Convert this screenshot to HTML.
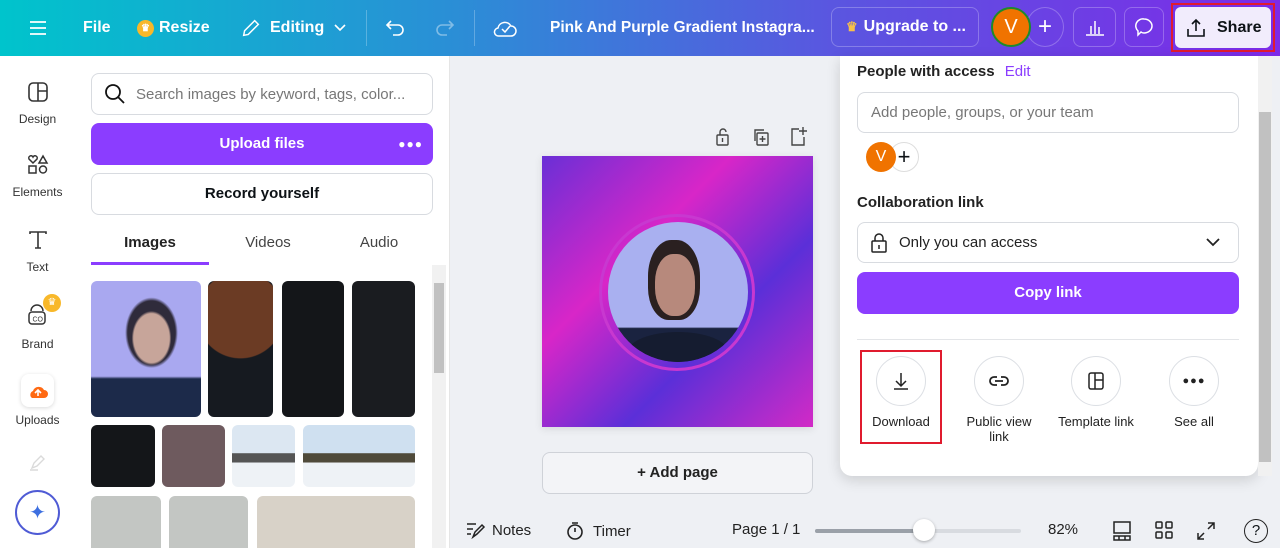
<!DOCTYPE html>
<html><head><meta charset="utf-8"><style>
*{box-sizing:border-box;margin:0;padding:0}
body{width:1280px;height:548px;overflow:hidden;font-family:"Liberation Sans",sans-serif;background:#eef0f4;position:relative;color:#0d1216}
.a{position:absolute}
.hdr{left:0;top:0;width:1280px;height:56px;background:linear-gradient(90deg,#00c4cc 0%,#2a8fd6 35%,#5a56e0 65%,#7d2ae8 100%);color:#fff;font-weight:bold;font-size:16px}
.hdr .h{position:absolute;top:0;height:56px;display:flex;align-items:center}
.btnb{position:absolute;border:1px solid rgba(255,255,255,.25);border-radius:8px;height:40px;top:7px;display:flex;align-items:center}
.side{left:0;top:56px;width:75px;height:492px;background:#fff}
.si{width:75px;text-align:center;font-size:12px;color:#333}
.panel{left:75px;top:56px;width:375px;height:492px;background:#fff;border-right:1px solid #e5e5e5}
.inp{border:1px solid #d8dbe0;border-radius:8px;background:#fff}
.pop{left:840px;top:56px;width:418px;height:420px;background:#fff;border-radius:0 0 12px 12px;box-shadow:0 4px 14px rgba(0,0,0,.15)}
.sb{text-align:center;font-size:13px;color:#222}
.circ{width:50px;height:50px;border-radius:50%;border:1px solid #dcdfe4;margin:0 auto 8px;display:flex;align-items:center;justify-content:center}
</style></head><body>
<div class="a hdr">
 <div class="h" style="left:29px"><svg width="18" height="16" viewBox="0 0 18 16" stroke="#fff" stroke-width="1.8"><path d="M1 2h16M1 8h16M1 14h16"/></svg></div>
 <div class="h" style="left:83px">File</div>
 <div class="h" style="left:137px"><span style="width:17px;height:17px;border-radius:50%;background:#f8b82a;display:inline-block;margin-right:5px;color:#fff;font-size:10px;text-align:center;line-height:17px">♛</span>Resize</div>
 <div class="h" style="left:240px"><svg width="22" height="22" viewBox="0 0 24 24" fill="none" stroke="#fff" stroke-width="1.6"><path d="M4 20l1-5L16 4l4 4L9 19z"/></svg><span style="margin-left:8px">Editing</span><svg style="margin-left:10px" width="12" height="8" viewBox="0 0 12 8" fill="none" stroke="#fff" stroke-width="1.6"><path d="M1 1l5 5 5-5"/></svg></div>
 <div class="a" style="left:366px;top:10px;width:1px;height:36px;background:rgba(255,255,255,.25)"></div>
 <div class="h" style="left:385px"><svg width="22" height="20" viewBox="0 0 22 20" fill="none" stroke="#fff" stroke-width="1.6"><path d="M6 3L2 7l4 4M2 7h11a5 5 0 010 10H8"/></svg></div>
 <div class="h" style="left:433px;opacity:.4"><svg width="22" height="20" viewBox="0 0 22 20" fill="none" stroke="#fff" stroke-width="1.6"><path d="M16 3l4 4-4 4M20 7H9a5 5 0 000 10h5"/></svg></div>
 <div class="a" style="left:474px;top:10px;width:1px;height:36px;background:rgba(255,255,255,.25)"></div>
 <div class="h" style="left:493px"><svg width="24" height="22" viewBox="0 0 24 22" fill="none" stroke="#fff" stroke-width="1.5"><path d="M6 19h12a5 5 0 000-10 7 7 0 00-13 2 4 4 0 001 8z"/><path d="M9 12l3 3 5-6"/></svg></div>
 <div class="h" style="left:550px;font-size:15.5px">Pink And Purple Gradient Instagra...</div>
 <div class="btnb" style="left:831px;width:148px;padding-left:14px"><span style="color:#f8c04a;margin-right:6px;font-size:13px">♛</span>Upgrade to ...</div>
 <div class="a" style="left:1026px;top:7px;width:38px;height:40px;border-radius:50%;border:1px solid rgba(255,255,255,.25);display:flex;align-items:center;justify-content:center;font-weight:normal;font-size:24px">+</div>
 <div class="a" style="left:991px;top:7px;width:40px;height:40px;border-radius:50%;background:#f07300;border:2px solid #1e8a2a;display:flex;align-items:center;justify-content:center;font-weight:normal;font-size:20px">V</div>
 <div class="btnb" style="left:1073px;width:43px;justify-content:center"><svg width="20" height="18" viewBox="0 0 20 18" fill="none" stroke="#fff" stroke-width="1.5"><path d="M1 17h18M6 16V8M10 16V3M14 16V9"/></svg></div>
 <div class="btnb" style="left:1124px;width:40px;justify-content:center"><svg width="22" height="22" viewBox="0 0 22 22" fill="none" stroke="#fff" stroke-width="1.5"><path d="M11 3a8 7 0 110 14c-1 0-2 0-3-1l-3 3v-4a7 7 0 016-12z"/></svg></div>
 <div class="a" style="left:1171px;top:3px;width:104px;height:49px;border:2px solid #e01b2e"></div>
 <div class="a" style="left:1175px;top:7px;width:96px;height:41px;background:#f1ecfc;border-radius:6px;color:#0d1216;padding-left:10px;display:flex;align-items:center"><svg width="22" height="22" viewBox="0 0 22 22" fill="none" stroke="#0d1216" stroke-width="1.6"><path d="M3 12v7h16v-7M11 14V3M7 7l4-4 4 4"/></svg><span style="margin-left:10px">Share</span></div>
</div>

<div class="a side">
 <div class="a si" style="top:25px"><svg width="22" height="22" viewBox="0 0 22 22" fill="none" stroke="#333" stroke-width="1.6"><rect x="2" y="2" width="18" height="18" rx="4"/><path d="M11 2v18M11 10h9"/></svg><div style="margin-top:6px">Design</div></div>
 <div class="a si" style="top:98px"><svg width="22" height="22" viewBox="0 0 22 22" fill="none" stroke="#333" stroke-width="1.5"><path d="M6 9L2 5a2 2 0 014-2 2 2 0 014 2zM16 2l4 7h-8z"/><rect x="2" y="12" width="7" height="7"/><circle cx="16" cy="15.5" r="3.5"/></svg><div style="margin-top:6px">Elements</div></div>
 <div class="a si" style="top:173px"><svg width="22" height="22" viewBox="0 0 22 22" fill="none" stroke="#333" stroke-width="1.6"><path d="M3 5V3h16v2M11 3v16M8 19h6"/></svg><div style="margin-top:6px">Text</div></div>
 <div class="a si" style="top:246px"><svg width="26" height="26" viewBox="0 0 26 26" fill="none" stroke="#333" stroke-width="1.5"><rect x="4" y="10" width="16" height="12" rx="3"/><path d="M6 9a6 6 0 0112 0"/><text x="7.5" y="19.5" font-size="7" fill="#333" stroke="none" font-family="Liberation Sans">CO</text></svg><div style="position:absolute;left:43px;top:-8px;width:18px;height:18px;border-radius:50%;background:#f8b82a;color:#fff;font-size:10px;line-height:18px">♛</div><div style="margin-top:6px">Brand</div></div>
 <div class="a" style="left:21px;top:318px;width:33px;height:33px;border-radius:8px;background:#fff;box-shadow:0 1px 4px rgba(0,0,0,.15);display:flex;align-items:center;justify-content:center"><svg width="22" height="16" viewBox="0 0 22 16"><path d="M5 15h12a4 4 0 000-8 6 6 0 00-11 1 4 4 0 00-1 7z" fill="#ff6a13"/><path d="M11 13V7M8 10l3-3 3 3" stroke="#fff" stroke-width="1.6" fill="none"/></svg></div>
 <div class="a si" style="top:357px">Uploads</div>
 <div class="a" style="left:28px;top:396px;opacity:.3"><svg width="20" height="20" viewBox="0 0 20 20" fill="none" stroke="#888" stroke-width="1.4"><path d="M4 16l2-5 7-7 3 3-7 7z M2 18h8"/></svg></div>
 <div class="a" style="left:15px;top:434px;width:45px;height:45px;border-radius:50%;border:2px solid #4f5bd5;display:flex;align-items:center;justify-content:center;background:#fff"><span style="color:#3d6fe0;font-size:20px">✦</span></div>
</div>

<div class="a panel">
 <div class="a inp" style="left:16px;top:17px;width:342px;height:42px;display:flex;align-items:center;padding-left:12px;font-size:15px;color:#777"><svg width="22" height="22" viewBox="0 0 22 22" fill="none" stroke="#111" stroke-width="1.8"><circle cx="9" cy="9" r="7"/><path d="M14 14l6 6"/></svg><span style="margin-left:10px">Search images by keyword, tags, color...</span></div>
 <div class="a" style="left:16px;top:67px;width:342px;height:42px;border-radius:8px;background:#8b3dff;color:#fff;font-weight:bold;font-size:15px;text-align:center;line-height:42px">Upload files<span style="position:absolute;right:10px;letter-spacing:1px;font-size:12px">●●●</span></div>
 <div class="a inp" style="left:16px;top:117px;width:342px;height:42px;text-align:center;line-height:40px;font-size:15px;font-weight:bold">Record yourself</div>
 <div class="a" style="left:16px;top:178px;width:118px;text-align:center;font-size:15px;font-weight:bold;color:#222">Images</div>
 <div class="a" style="left:134px;top:178px;width:118px;text-align:center;font-size:15px;color:#444">Videos</div>
 <div class="a" style="left:245px;top:178px;width:118px;text-align:center;font-size:15px;color:#444">Audio</div>
 <div class="a" style="left:16px;top:206px;width:118px;height:3px;background:#8b3dff"></div>
 <div class="a" style="left:357px;top:209px;width:14px;height:283px;background:#f1f1f1"><div style="margin:18px 2px 0;height:90px;background:#c1c1c1"></div></div>
 <div class="a" style="left:16px;top:225px;width:110px;height:136px;border-radius:6px;background:radial-gradient(ellipse 18% 20% at 55% 42%,#c7a59a 0 90%,transparent 100%),radial-gradient(ellipse 24% 26% at 55% 38%,#2f2b3b 0 90%,transparent 100%),linear-gradient(180deg,#a9a8f0 0 70%,#1c2a4a 72%)"></div>
 <div class="a" style="left:133px;top:225px;width:65px;height:136px;border-radius:6px;background:radial-gradient(circle at 50% 25%,#6b3b24 0 40%,transparent 41%),#161a20"></div>
 <div class="a" style="left:207px;top:225px;width:62px;height:136px;border-radius:6px;background:#141619"></div>
 <div class="a" style="left:277px;top:225px;width:63px;height:136px;border-radius:6px;background:#1a1c20"></div>
 <div class="a" style="left:16px;top:369px;width:64px;height:62px;border-radius:6px;background:#141619"></div>
 <div class="a" style="left:87px;top:369px;width:63px;height:62px;border-radius:6px;background:#6e5a5e"></div>
 <div class="a" style="left:157px;top:369px;width:63px;height:62px;border-radius:6px;background:linear-gradient(180deg,#dce7f2 0 45%,#555 46% 60%,#eef2f6 61%)"></div>
 <div class="a" style="left:228px;top:369px;width:112px;height:62px;border-radius:6px;background:linear-gradient(180deg,#cfe0f0 0 45%,#4f4a3a 46% 60%,#eef2f6 61%)"></div>
 <div class="a" style="left:16px;top:440px;width:70px;height:52px;border-radius:6px 6px 0 0;background:#c3c6c3"></div>
 <div class="a" style="left:94px;top:440px;width:79px;height:52px;border-radius:6px 6px 0 0;background:#c3c6c3"></div>
 <div class="a" style="left:182px;top:440px;width:158px;height:52px;border-radius:6px 6px 0 0;background:#d8d2c8"></div>
</div>

<div class="a" style="left:713px;top:127px"><svg width="20" height="20" viewBox="0 0 20 20" fill="none" stroke="#444" stroke-width="1.4"><rect x="4" y="8" width="11" height="10" rx="1"/><path d="M7 8V5a3 3 0 016 0M9.5 11v4"/></svg></div>
<div class="a" style="left:751px;top:127px"><svg width="20" height="20" viewBox="0 0 20 20" fill="none" stroke="#444" stroke-width="1.4"><rect x="6" y="6" width="11" height="12" rx="1"/><path d="M4 14V3h9M11.5 9v6M8.5 12h6"/></svg></div>
<div class="a" style="left:789px;top:125px"><svg width="20" height="22" viewBox="0 0 20 22" fill="none" stroke="#444" stroke-width="1.4"><path d="M10 4H3v16h12v-8M14 2v8M10 6h8"/></svg></div>

<div class="a" style="left:542px;top:156px;width:271px;height:271px;box-shadow:0 2px 8px rgba(0,0,0,.1);background:linear-gradient(135deg,#6a2fd6 0%,#d826c8 35%,#5b2fd8 65%,#d22ac6 100%)"></div>
<div class="a" style="left:599px;top:214px;width:156px;height:157px;border-radius:50%;border:3px solid #c838d0"></div>
<div class="a" style="left:608px;top:222px;width:140px;height:140px;border-radius:50%;overflow:hidden;background:linear-gradient(180deg,#a9b0f0 0 75%,#1a2340 76%)">
 <div style="position:absolute;left:40px;top:18px;width:52px;height:80px;border-radius:45% 45% 40% 40%;background:#2a2020"></div>
 <div style="position:absolute;left:47px;top:32px;width:40px;height:62px;border-radius:45%;background:#b7897c"></div>
 <div style="position:absolute;left:20px;top:110px;width:100px;height:40px;border-radius:50% 50% 0 0;background:#151c30"></div>
</div>

<div class="a" style="left:542px;top:452px;width:271px;height:42px;border:1px solid #cfd2d8;border-radius:8px;background:#f3f4f7;text-align:center;line-height:40px;font-size:15px;font-weight:bold;color:#222">+ Add page</div>

<div class="a pop">
 <div class="a" style="left:17px;top:7px;font-size:15px;font-weight:bold;color:#222">People with access <span style="color:#8b3dff;font-weight:normal;margin-left:6px">Edit</span></div>
 <div class="a inp" style="left:17px;top:36px;width:382px;height:41px;padding-left:13px;line-height:39px;font-size:15px;color:#777">Add people, groups, or your team</div>
 <div class="a" style="left:49px;top:86px;width:30px;height:30px;border-radius:50%;border:1px solid #ddd;background:#fff;text-align:center;line-height:28px;font-size:22px">+</div>
 <div class="a" style="left:26px;top:86px;width:30px;height:30px;border-radius:50%;background:#f07300;color:#fff;text-align:center;line-height:30px;font-size:16px">V</div>
 <div class="a" style="left:17px;top:138px;font-size:15px;font-weight:bold;color:#222">Collaboration link</div>
 <div class="a inp" style="left:17px;top:166px;width:382px;height:41px;display:flex;align-items:center;padding-left:12px;font-size:15px;color:#222"><svg width="18" height="22" viewBox="0 0 18 22" fill="none" stroke="#222" stroke-width="1.5"><rect x="2" y="9" width="14" height="11" rx="1"/><path d="M5 9V6a4 4 0 018 0v3M9 13v4"/></svg><span style="margin-left:11px">Only you can access</span><svg style="position:absolute;right:18px" width="14" height="9" viewBox="0 0 14 9" fill="none" stroke="#222" stroke-width="1.8"><path d="M1 1l6 6 6-6"/></svg></div>
 <div class="a" style="left:17px;top:216px;width:382px;height:42px;border-radius:8px;background:#8b3dff;color:#fff;text-align:center;line-height:42px;font-weight:bold;font-size:15px">Copy link</div>
 <div class="a" style="left:17px;top:283px;width:382px;height:1px;background:#e3e5e8"></div>
 <div class="a" style="left:20px;top:294px;width:82px;height:94px;border:2px solid #e01b2e"></div>
 <div class="a sb" style="left:21px;top:300px;width:80px"><div class="circ"><svg width="20" height="20" viewBox="0 0 20 20" fill="none" stroke="#222" stroke-width="1.5"><path d="M10 2v13M5 10l5 5 5-5M3 18h14"/></svg></div>Download</div>
 <div class="a sb" style="left:114px;top:300px;width:90px"><div class="circ"><svg width="22" height="16" viewBox="0 0 22 16" fill="none" stroke="#222" stroke-width="1.8"><path d="M9 4H6a4 4 0 000 8h3M13 4h3a4 4 0 010 8h-3M7 8h8"/></svg></div>Public view<br>link</div>
 <div class="a sb" style="left:206px;top:300px;width:100px"><div class="circ"><svg width="20" height="20" viewBox="0 0 20 20" fill="none" stroke="#222" stroke-width="1.5"><rect x="3" y="2" width="14" height="16" rx="2"/><path d="M9 2v16M9 9h8"/></svg></div>Template link</div>
 <div class="a sb" style="left:314px;top:300px;width:80px"><div class="circ" style="font-size:11px;letter-spacing:1px">●●●</div>See all</div>
</div>
<div class="a" style="left:1258px;top:56px;width:14px;height:420px;background:#f1f1f1"><div style="margin:56px 1px 0;height:350px;background:#c1c1c1"></div></div>

<div class="a" style="left:466px;top:521px;font-size:15px;color:#222;display:flex;align-items:center"><svg width="20" height="18" viewBox="0 0 20 18" fill="none" stroke="#222" stroke-width="1.5"><path d="M1 3h9M1 8h6M1 13h4M7 16l2-5 7-7 2 2-7 7z"/></svg><span style="margin-left:6px">Notes</span></div>
<div class="a" style="left:566px;top:521px;font-size:15px;color:#222;display:flex;align-items:center"><svg width="18" height="20" viewBox="0 0 18 20" fill="none" stroke="#222" stroke-width="1.6"><circle cx="9" cy="11" r="7"/><path d="M6 2h6M9 7v4"/></svg><span style="margin-left:9px">Timer</span></div>
<div class="a" style="left:732px;top:521px;font-size:15px;color:#222">Page 1 / 1</div>
<div class="a" style="left:815px;top:529px;width:206px;height:4px;border-radius:2px;background:#d8dbe0"><div style="width:110px;height:4px;background:#9aa0a8;border-radius:2px"></div></div>
<div class="a" style="left:913px;top:519px;width:22px;height:22px;border-radius:50%;background:#fff;box-shadow:0 1px 3px rgba(0,0,0,.3)"></div>
<div class="a" style="left:1048px;top:521px;font-size:15px;color:#222">82%</div>
<div class="a" style="left:1112px;top:520px"><svg width="20" height="22" viewBox="0 0 20 22" fill="none" stroke="#222" stroke-width="1.5"><rect x="2" y="2" width="16" height="11"/><path d="M2 16h16v4H2zM7 16v4M13 16v4"/></svg></div>
<div class="a" style="left:1155px;top:521px"><svg width="18" height="18" viewBox="0 0 18 18" fill="none" stroke="#222" stroke-width="1.5"><rect x="1" y="1" width="6" height="6" rx="1"/><rect x="11" y="1" width="6" height="6" rx="1"/><rect x="1" y="11" width="6" height="6" rx="1"/><rect x="11" y="11" width="6" height="6" rx="1"/></svg></div>
<div class="a" style="left:1196px;top:521px"><svg width="20" height="20" viewBox="0 0 20 20" fill="none" stroke="#222" stroke-width="1.5"><path d="M12 2h6v6M18 2l-6 6M8 18H2v-6M2 18l6-6"/></svg></div>
<div class="a" style="left:1244px;top:519px;width:24px;height:24px;border-radius:50%;border:1.6px solid #222;text-align:center;line-height:22px;font-size:15px">?</div>
</body></html>
